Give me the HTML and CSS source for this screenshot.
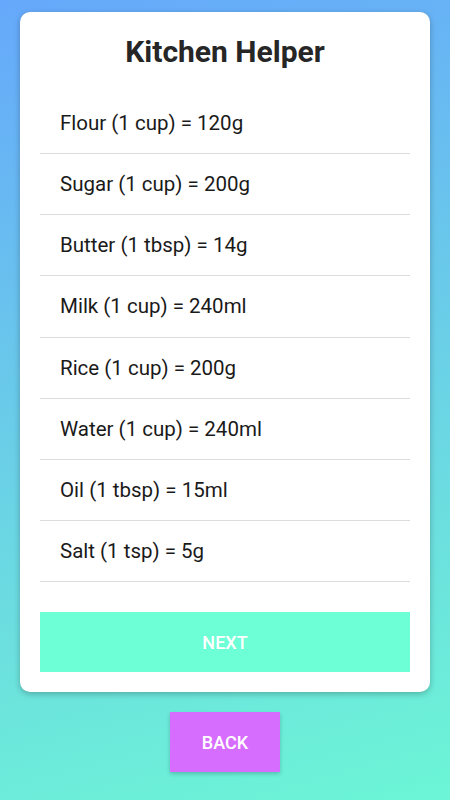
FILE: index.html
```html
<!DOCTYPE html>
<html lang="en">
<head>
    <title>Kitchen Helper</title>
    <link rel="stylesheet" href="styles.css">
</head>
<body>
    <div class="card">
        <h1>Kitchen Helper</h1>
        <ul class="list">
            <li>Flour (1 cup) = 120g</li>
            <li>Sugar (1 cup) = 200g</li>
            <li>Butter (1 tbsp) = 14g</li>
            <li>Milk (1 cup) = 240ml</li>
            <li>Rice (1 cup) = 200g</li>
            <li>Water (1 cup) = 240ml</li>
            <li>Oil (1 tbsp) = 15ml</li>
            <li>Salt (1 tsp) = 5g</li>
        </ul>
        <button class="next">NEXT</button>
    </div>
    <div class="footer">
        <button class="back">BACK</button>
    </div>
</body>
</html>
```

FILE: styles.css
```css
html, body {
    margin: 0;
    height: 100%;
}
body {
    font-family: Roboto, Arial, sans-serif;
    background: linear-gradient(165deg, #66a8fb 0%, #6ce3dd 75%, #6cf6d6 100%);
    padding: 12px 20px 0;
    box-sizing: border-box;
}
.card {
    background: #fff;
    border-radius: 10px;
    padding: 20px;
    box-shadow: 0 2px 6px rgba(0, 0, 0, 0.25);
}
h1 {
    margin: 0;
    height: 61px;
    font-size: 30px;
    font-weight: bold;
    color: #262626;
    text-align: center;
    line-height: 40px;
}
.list {
    list-style: none;
    margin: 0 0 30px;
    padding: 0;
}
.list li {
    height: 60.15px;
    line-height: 60px;
    padding-left: 20px;
    font-size: 20.5px;
    color: #1a1a1a;
    border-bottom: 1px solid #ddd;
}
button {
    border: none;
    color: #fff;
    font-family: Roboto, Arial, sans-serif;
    font-size: 18px;
    font-weight: 500;
    height: 60px;
    cursor: pointer;
}
.next {
    display: block;
    width: 100%;
    background: #6dffd5;
}
.footer {
    display: flex;
    justify-content: center;
    padding-top: 20px;
}
.back {
    width: 110px;
    background: #d66dff;
    box-shadow: 0 2px 4px rgba(0, 0, 0, 0.2);
}
```
